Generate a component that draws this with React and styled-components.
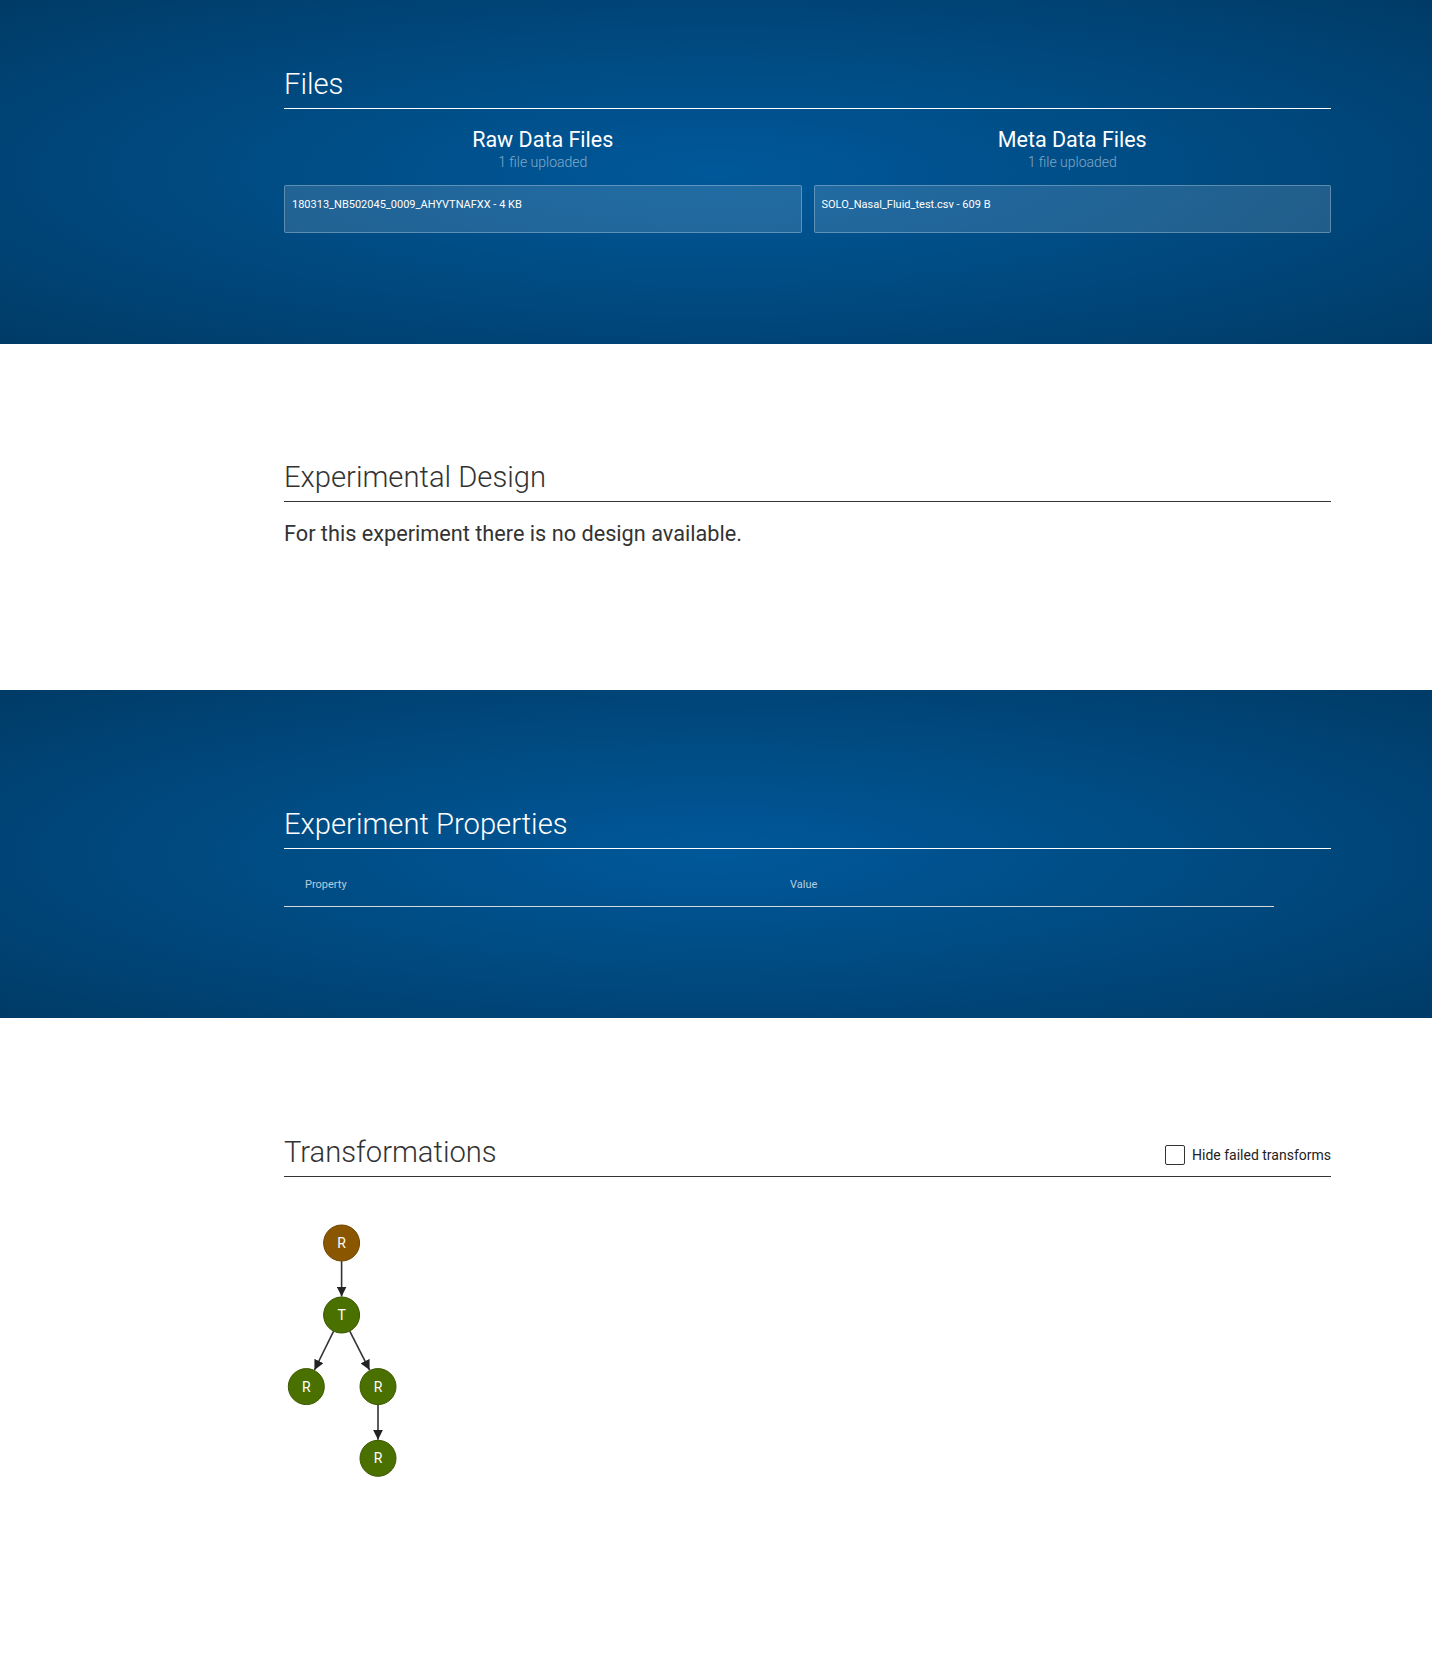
import React from "react";
import styled, { createGlobalStyle, css } from "styled-components";

const GlobalStyle = createGlobalStyle`
  html, body { margin: 0; padding: 0; background: #fff; }
  body { font-family: Roboto, "Noto Sans", "Liberation Sans", sans-serif; color: #333; }
  * { box-sizing: border-box; }
`;

const Section = styled.section`
  padding-top: ${(p) => p.$top || 118}px;
  height: ${(p) => p.$height}px;
  ${(p) =>
    p.$dark &&
    css`
      color: #fff;
      background: radial-gradient(
        ellipse farthest-corner at 50% 50%,
        #00589a 0%,
        #004c84 45%,
        #003b67 100%
      );
    `}
`;

const Container = styled.div`
  width: 1047px;
  margin-left: 284px;
`;

const HeadingRow = styled.div`
  display: flex;
  justify-content: space-between;
  align-items: flex-end;
  padding-bottom: 8px;
  border-bottom: 1px solid ${(p) => (p.$dark ? "#ffffff" : "#333333")};
`;

const Heading = styled.h2`
  margin: 0;
  font-size: 29.2px;
  line-height: 32px;
  font-weight: 300;
  color: ${(p) => (p.$dark ? "#ffffff" : "#333333")};
`;

const FileColumns = styled.div`
  display: grid;
  grid-template-columns: 1fr 1fr;
  column-gap: 12px;
  margin-top: 18px;
`;

const FileColumn = styled.div`
  display: flex;
  flex-direction: column;
  align-items: stretch;
`;

const ColumnTitle = styled.div`
  text-align: center;
  font-size: 21.5px;
  line-height: 26px;
  font-weight: 400;
  color: #fff;
`;

const ColumnSub = styled.div`
  text-align: center;
  font-size: 14px;
  line-height: 18px;
  font-weight: 300;
  color: rgba(255, 255, 255, 0.5);
`;

const FileBox = styled.div`
  margin-top: 14px;
  height: 48px;
  padding: 11px 7px;
  font-size: 11px;
  line-height: 15px;
  color: #fff;
  background: rgba(255, 255, 255, 0.13);
  border: 1px solid rgba(255, 255, 255, 0.28);
  border-radius: 2px;
`;

const Paragraph = styled.p`
  margin: 18px 0 0;
  font-size: 21.7px;
  line-height: 28px;
  color: #333;
`;

const Table = styled.table`
  width: 990px;
  margin-top: 16px;
  border-collapse: collapse;
`;

const Th = styled.th`
  width: ${(p) => p.$w || "auto"};
  text-align: left;
  padding: 12px 20px 13px 21px;
  font-size: 11px;
  line-height: 16px;
  font-weight: 400;
  color: rgba(255, 255, 255, 0.72);
  border-bottom: 1px solid #d8d8d8;
`;

const CheckLabel = styled.label`
  display: flex;
  align-items: center;
  gap: 7px;
  margin-bottom: 3px;
  font-size: 14px;
  line-height: 20px;
  color: #222;
  cursor: pointer;
`;

const CheckBox = styled.span`
  width: 20px;
  height: 20px;
  border: 1.5px solid #333;
  border-radius: 2px;
  background: #fff;
`;

const Graph = styled.svg`
  display: block;
  margin-top: 24px;
`;

const NODE_R = 18;
const nodes = [
  { id: "a", x: 57.6, y: 42, label: "R", color: "#8a5700", stroke: "#6f4600" },
  { id: "b", x: 57.6, y: 114, label: "T", color: "#4a7000", stroke: "#3b5900" },
  { id: "c", x: 22.3, y: 185.6, label: "R", color: "#4a7000", stroke: "#3b5900" },
  { id: "d", x: 94, y: 185.6, label: "R", color: "#4a7000", stroke: "#3b5900" },
  { id: "e", x: 94, y: 257.3, label: "R", color: "#4a7000", stroke: "#3b5900" },
];
const edges = [
  ["a", "b"],
  ["b", "c"],
  ["b", "d"],
  ["d", "e"],
];

function TransformGraph() {
  const byId = Object.fromEntries(nodes.map((n) => [n.id, n]));
  return (
    <Graph width="140" height="290" viewBox="0 0 140 290">
      <defs>
        <marker
          id="arrow"
          viewBox="0 0 10 10"
          refX="10"
          refY="5"
          markerWidth="10"
          markerHeight="10"
          markerUnits="userSpaceOnUse"
          orient="auto"
        >
          <path d="M0,0 L10,5 L0,10 z" fill="#222" />
        </marker>
      </defs>
      {edges.map(([s, t]) => {
        const a = byId[s];
        const b = byId[t];
        const dx = b.x - a.x;
        const dy = b.y - a.y;
        const len = Math.hypot(dx, dy);
        const ux = dx / len;
        const uy = dy / len;
        return (
          <line
            key={s + t}
            x1={a.x + ux * NODE_R}
            y1={a.y + uy * NODE_R}
            x2={b.x - ux * (NODE_R + 0.5)}
            y2={b.y - uy * (NODE_R + 0.5)}
            stroke="#333"
            strokeWidth="1.6"
            markerEnd="url(#arrow)"
          />
        );
      })}
      {nodes.map((n) => (
        <g key={n.id}>
          <circle cx={n.x} cy={n.y} r={NODE_R} fill={n.color} stroke={n.stroke} strokeWidth="1" />
          <text
            x={n.x}
            y={n.y + 5}
            textAnchor="middle"
            fontSize="14"
            fontFamily="Roboto, sans-serif"
            fill="#fff"
          >
            {n.label}
          </text>
        </g>
      ))}
    </Graph>
  );
}

export default function App() {
  return (
    <>
      <GlobalStyle />
      <Section $dark $top={68} $height={344}>
        <Container>
          <HeadingRow $dark>
            <Heading $dark>Files</Heading>
          </HeadingRow>
          <FileColumns>
            <FileColumn>
              <ColumnTitle>Raw Data Files</ColumnTitle>
              <ColumnSub>1 file uploaded</ColumnSub>
              <FileBox>180313_NB502045_0009_AHYVTNAFXX - 4 KB</FileBox>
            </FileColumn>
            <FileColumn>
              <ColumnTitle>Meta Data Files</ColumnTitle>
              <ColumnSub>1 file uploaded</ColumnSub>
              <FileBox>SOLO_Nasal_Fluid_test.csv - 609 B</FileBox>
            </FileColumn>
          </FileColumns>
        </Container>
      </Section>

      <Section $height={346} $top={117}>
        <Container>
          <HeadingRow>
            <Heading>Experimental Design</Heading>
          </HeadingRow>
          <Paragraph>For this experiment there is no design available.</Paragraph>
        </Container>
      </Section>

      <Section $dark $height={328}>
        <Container>
          <HeadingRow $dark>
            <Heading $dark>Experiment Properties</Heading>
          </HeadingRow>
          <Table>
            <thead>
              <tr>
                <Th $w="485px">Property</Th>
                <Th>Value</Th>
              </tr>
            </thead>
            <tbody />
          </Table>
        </Container>
      </Section>

      <Section $height={635}>
        <Container>
          <HeadingRow>
            <Heading>Transformations</Heading>
            <CheckLabel>
              <CheckBox />
              Hide failed transforms
            </CheckLabel>
          </HeadingRow>
          <TransformGraph />
        </Container>
      </Section>
    </>
  );
}
